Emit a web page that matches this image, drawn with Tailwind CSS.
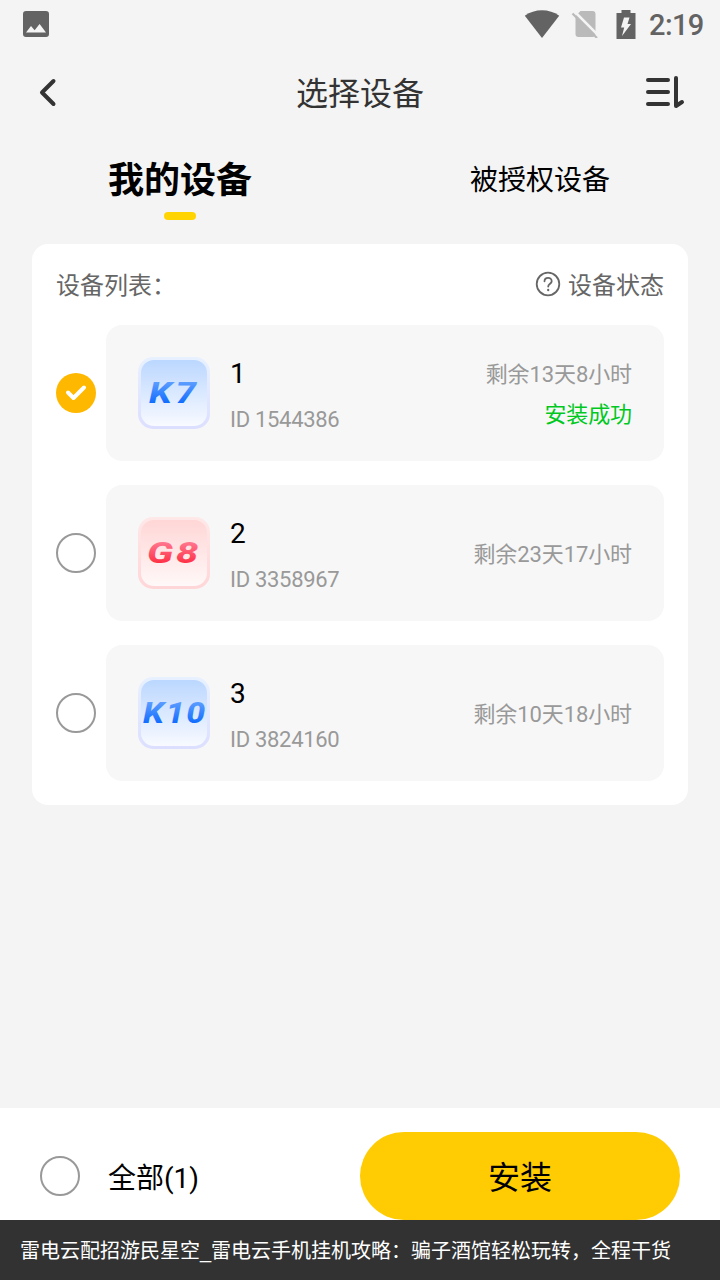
<!DOCTYPE html>
<html lang="zh-CN">
<head>
    <meta charset="UTF-8">
    <meta name="viewport" content="width=device-width, initial-scale=1.0">
    <title>选择设备</title>
    <script src="https://cdn.jsdelivr.net/npm/@tailwindcss/browser@4"></script>
</head>
<body class="bg-[#f4f4f4] font-['Roboto','Noto_Sans_CJK_SC',sans-serif] text-black">
    <div class="w-[720px] h-[1280px] flex flex-col overflow-hidden">

        <!-- 状态栏 -->
        <div class="h-12 shrink-0 flex items-center pl-[23px] pr-4 text-[#636363]">
            <svg class="w-[26px] h-[26px]" viewBox="0 0 26 26">
                <rect width="26" height="26" rx="3" fill="#636363"/>
                <path d="M3 21.5L8 15l3.6 4.2L16.6 13l6.4 8.5z" fill="#f4f4f4"/>
            </svg>
            <svg class="ml-auto w-[36px] h-7" viewBox="0 0 36 28">
                <path d="M0.8 5.8C10.5-1.6 25.500-1.600 35.200 5.800L18 28z" fill="#636363"/>
            </svg>
            <svg class="ml-[11px] w-7 h-7" viewBox="0 0 28 28">
                <path d="M9.500 1H21.500Q24.500 1 24.500 4V24Q24.500 27 21.500 27H7.500Q4.500 27 4.500 24V6z" fill="#bababa"/>
                <path d="M3.500 1.500L28 26" stroke="#f4f4f4" stroke-width="2.500"/>
                <path d="M1.500 3.500L26 28" stroke="#bababa" stroke-width="2.200"/>
            </svg>
            <svg class="ml-[17px] w-5 h-[29px]" viewBox="0 0 20 29">
                <path d="M0.500 3H5.500V0H14.500V3H19.500V29H0.500z" fill="#636363"/>
                <path d="M8 7.500H13.500L11.500 14H15L6 26L8.200 17.500H5z" fill="#f4f4f4"/>
            </svg>
            <div class="ml-[13px] w-[55px] text-[29px] leading-none font-medium tracking-[-0.6px] whitespace-nowrap pt-[3px]">2:19</div>
        </div>

        <!-- 标题栏 -->
        <div class="h-[88px] shrink-0 grid grid-cols-[1fr_auto_1fr] items-center pl-[38px] pr-[35px] text-[#333]">
            <svg class="w-[49px] h-8" viewBox="0 0 49 32" fill="none" stroke="#333" stroke-width="4" stroke-linecap="round" stroke-linejoin="round">
                <path d="M15.500 5L4 16.500L15.500 28"/>
            </svg>
            <h1 class="-ml-[3px] pt-1 text-[32px] leading-none">选择设备</h1>
            <svg class="justify-self-end w-10 h-8" viewBox="0 0 40 32" fill="none" stroke="#333" stroke-width="4" stroke-linecap="round" stroke-linejoin="round">
                <path d="M3 4H23M3 16H23M3 28H23M31 2V30L37 26"/>
            </svg>
        </div>

        <!-- 选项卡 -->
        <div class="h-[108px] shrink-0 grid grid-cols-2 text-center">
            <div class="flex flex-col items-center">
                <div class="h-[76px] pt-5 text-[36px] leading-[50px] font-bold">我的设备</div>
                <div class="w-8 h-2 rounded-[4px] bg-[#ffd400]"></div>
            </div>
            <div class="pt-5 text-[28px] leading-[50px]">被授权设备</div>
        </div>

        <!-- 设备列表 -->
        <div class="mx-8 px-6 pb-6 bg-white rounded-[16px]">
            <div class="h-[81px] flex items-center text-2xl text-[#666]">
                <div class="pt-[3px]">设备列表：</div>
                <svg class="ml-auto mr-[7px] mb-[2px] w-[26px] h-[26px]" viewBox="0 0 26 26" fill="none" stroke="#666" stroke-width="1.800" stroke-linecap="round">
                    <circle cx="13" cy="13" r="11.300"/>
                    <path d="M9.500 10.300C9.500 5.700 16.700 5.700 16.700 10.200C16.700 12.700 13.200 12.800 13.200 15.600"/>
                    <path d="M13.200 18.800V19.200" stroke-width="2.200"/>
                </svg>
                <div class="pt-[3px]">设备状态</div>
            </div>

            <div class="flex flex-col gap-6">
                <div class="flex items-center gap-[10px]">
                    <svg class="w-10 h-10" viewBox="0 0 40 40" fill="none">
                        <circle cx="20" cy="20" r="20" fill="#ffb800"/>
                        <path d="M12 19.500L17.500 25L28 14.500" stroke="#fff" stroke-width="4" stroke-linecap="round" stroke-linejoin="round"/>
                    </svg>
                    <div class="flex-1 h-[136px] px-8 flex items-center bg-[#f7f7f7] rounded-[16px]">
                        <svg class="w-[72px] h-[72px]" viewBox="0 0 72 72">
                            <defs>
                                <linearGradient id="blueEdge" x1="0" y1="0" x2="0" y2="1"><stop stop-color="#e8f1ff"/><stop offset="1" stop-color="#dcdfff"/></linearGradient>
                                <linearGradient id="blueFace" x1="0" y1="0" x2="0" y2="1"><stop stop-color="#bbd7ff"/><stop offset="1" stop-color="#f8faff"/></linearGradient>
                                <linearGradient id="blueText" gradientUnits="userSpaceOnUse" x1="0" y1="25" x2="0" y2="46"><stop stop-color="#5c9dff"/><stop offset="1" stop-color="#116dff"/></linearGradient>
                            </defs>
                            <rect width="72" height="72" rx="15" fill="url(#blueEdge)"/>
                            <rect x="3" y="3" width="66" height="66" rx="13" fill="url(#blueFace)"/>
                            <text x="11" y="46" textLength="51" letter-spacing="3" font-size="28.500" font-weight="800" font-style="italic" lengthAdjust="spacingAndGlyphs" fill="url(#blueText)">K7</text>
                        </svg>
                        <div class="ml-5 pt-[7px]">
                            <div class="text-[28px] leading-[46px]">1</div>
                            <div class="text-[22px] leading-[46px] tracking-[-0.3px] text-[#999]">ID 1544386</div>
                        </div>
                        <div class="ml-auto pt-1 text-right text-[22px] leading-10 tracking-[-0.1px] text-[#999]">
                            <div>剩余13天8小时</div>
                            <div class="text-[#00c81e]">安装成功</div>
                        </div>
                    </div>
                </div>

                <div class="flex items-center gap-[10px]">
                    <div class="w-10 h-10 rounded-full border-2 border-[#999]"></div>
                    <div class="flex-1 h-[136px] px-8 flex items-center bg-[#f7f7f7] rounded-[16px]">
                        <svg class="w-[72px] h-[72px]" viewBox="0 0 72 72">
                            <defs>
                                <linearGradient id="redEdge" x1="0" y1="0" x2="0" y2="1"><stop stop-color="#ffe8e8"/><stop offset="1" stop-color="#ffd6d8"/></linearGradient>
                                <linearGradient id="redFace" x1="0" y1="0" x2="0" y2="1"><stop stop-color="#ffd6d6"/><stop offset="1" stop-color="#fff8f8"/></linearGradient>
                                <linearGradient id="redText" gradientUnits="userSpaceOnUse" x1="0" y1="25" x2="0" y2="46"><stop stop-color="#ff7890"/><stop offset="1" stop-color="#ff3045"/></linearGradient>
                            </defs>
                            <rect width="72" height="72" rx="15" fill="url(#redEdge)"/>
                            <rect x="3" y="3" width="66" height="66" rx="13" fill="url(#redFace)"/>
                            <text x="9" y="46" textLength="54" letter-spacing="2" font-size="28.500" font-weight="800" font-style="italic" lengthAdjust="spacingAndGlyphs" fill="url(#redText)">G8</text>
                        </svg>
                        <div class="ml-5 pt-[7px]">
                            <div class="text-[28px] leading-[46px]">2</div>
                            <div class="text-[22px] leading-[46px] tracking-[-0.3px] text-[#999]">ID 3358967</div>
                        </div>
                        <div class="ml-auto pt-1 text-right text-[22px] leading-10 tracking-[-0.1px] text-[#999]">剩余23天17小时</div>
                    </div>
                </div>

                <div class="flex items-center gap-[10px]">
                    <div class="w-10 h-10 rounded-full border-2 border-[#999]"></div>
                    <div class="flex-1 h-[136px] px-8 flex items-center bg-[#f7f7f7] rounded-[16px]">
                        <svg class="w-[72px] h-[72px]" viewBox="0 0 72 72">
                            <rect width="72" height="72" rx="15" fill="url(#blueEdge)"/>
                            <rect x="3" y="3" width="66" height="66" rx="13" fill="url(#blueFace)"/>
                            <text x="5" y="46" textLength="64" letter-spacing="1.500" font-size="28.500" font-weight="800" font-style="italic" lengthAdjust="spacingAndGlyphs" fill="url(#blueText)">K10</text>
                        </svg>
                        <div class="ml-5 pt-[7px]">
                            <div class="text-[28px] leading-[46px]">3</div>
                            <div class="text-[22px] leading-[46px] tracking-[-0.3px] text-[#999]">ID 3824160</div>
                        </div>
                        <div class="ml-auto pt-1 text-right text-[22px] leading-10 tracking-[-0.1px] text-[#999]">剩余10天18小时</div>
                    </div>
                </div>
            </div>
        </div>

        <!-- 底部操作栏 -->
        <div class="mt-auto h-[112px] shrink-0 pt-6 px-10 flex items-center bg-white">
            <div class="w-10 h-10 rounded-full border-2 border-[#999]"></div>
            <div class="ml-7 pt-[5px] text-[28px]">全部(1)</div>
            <div class="ml-auto w-80 h-[88px] pt-1 rounded-full bg-[#ffcc04] flex items-center justify-center text-[32px]">安装</div>
        </div>
        <div class="h-[60px] shrink-0 px-5 pt-[2px] flex items-center bg-[#323232] text-white text-xl font-['Liberation_Sans','Noto_Sans_CJK_SC',sans-serif] whitespace-nowrap">雷电云配招游民星空_雷电云手机挂机攻略：骗子酒馆轻松玩转，全程干货</div>
    </div>
</body>
</html>
